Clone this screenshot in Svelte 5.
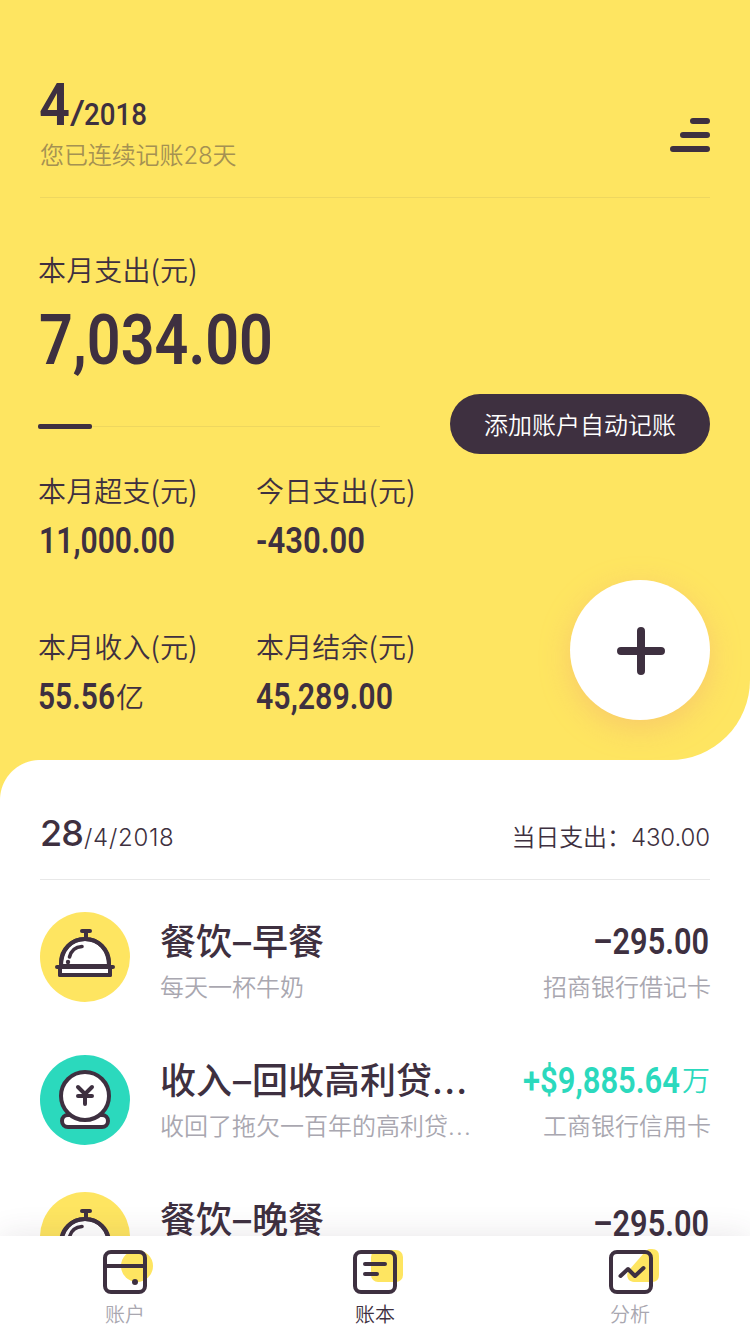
<script>
  const stats = [
    { label: '本月超支(元)', value: '11,000.00', width: 136, x: 1 },
    { label: '今日支出(元)', value: '-430.00', width: 109, x: 0 },
    { label: '本月收入(元)', value: '55.56', width: 77, x: 0, unit: '亿' },
    { label: '本月结余(元)', value: '45,289.00', width: 137, x: 0 }
  ];
  const records = [
    { kind: 'meal', title: ['餐饮', '早餐'], note: '每天一杯牛奶', amount: '–295.00', width: 116, account: '招商银行借记卡', iconTop: 0, amountTop: 0 },
    { kind: 'income', title: ['收入', '回收高利贷'], more: true, note: '收回了拖欠一百年的高利贷', amount: '+$9,885.64', width: 157, unit: '万', account: '工商银行信用卡', iconTop: 4, amountTop: 0 },
    { kind: 'meal', title: ['餐饮', '晚餐'], note: '每天一杯牛奶', amount: '–295.00', width: 116, account: '招商银行借记卡', iconTop: 2, amountTop: 4 }
  ];
</script>

{#snippet figure(text, size, width, x = 0)}
  <svg class="figure" {width} height={size} font-size={size}>
    <text {x} y={size * 0.86} textLength={width} lengthAdjust="spacingAndGlyphs">{text}</text>
  </svg>
{/snippet}

<div class="page">
  <header class="summary">
    <div class="top">
      <div>
        <div class="month">{@render figure('4', 60, 31, -1)}{@render figure('/', 34, 15)}{@render figure('2018', 32, 63)}</div>
        <p class="streak">您已连续记账28天</p>
      </div>
      <svg class="menu" width="40" height="34" viewBox="0 0 40 34">
        <path d="M23 3H37M13 17H37M3 31H37" />
      </svg>
    </div>
    <p class="label">本月支出(元)</p>
    <div class="total">{@render figure('7,034.00', 71, 234, 1)}</div>
    <div class="middle">
      <div class="track"><div class="bar" style:width="54px"></div></div>
      <button class="auto">添加账户自动记账</button>
    </div>
    <div class="bottom">
      <div class="stats">
        {#each stats as s}
          <div>
            <p class="label">{s.label}</p>
            <div class="value">{@render figure(s.value, 36, s.width, s.x)}{#if s.unit}<span class="unit">{s.unit}</span>{/if}</div>
          </div>
        {/each}
      </div>
      <button class="add" aria-label="+">
        <svg width="48" height="48" viewBox="0 0 48 48"><path d="M24 4V44M4 24H44" /></svg>
      </button>
    </div>
  </header>

  <main class="ledger">
    <div class="day">
      <div class="date"><b>28</b><span>/4/2018</span></div>
      <div class="spent">当日支出：<span>430.00</span></div>
    </div>
    {#each records as r}
      <article class="record">
        <div class="badge {r.kind}" style:margin-top="{r.iconTop}px">
          {#if r.kind === 'meal'}
            <svg width="90" height="90" viewBox="0 0 90 90">
              <path class="fill" d="M21 54C21 38 31 27 45 27S69 38 69 54Z" />
              <path class="fill" d="M20 55H70V63H20Z" />
              <path d="M42 19H50M46 19V26M21 54V51C21 37 32 27 45 27S69 37 69 51V54M17 55H73M20 56V63H70V56" />
              <path d="M29.500 45C31 39 35 35 42 34.500" stroke-width="3.600" />
              <circle class="dot" cx="28" cy="50" r="2.200" />
            </svg>
          {:else}
            <svg width="90" height="90" viewBox="0 0 90 90">
              <rect class="fill" x="22" y="60" width="46" height="12" rx="6" />
              <circle class="fill" cx="45" cy="41" r="24" />
              <path d="M38 32L45 39L52 32M38 41H52M45 39V49" />
            </svg>
          {/if}
        </div>
        <div class="what">
          <h3>{r.title[0]}<span class="dash">–</span>{r.title[1]}{#if r.more}<span class="dots">...</span>{/if}</h3>
          <p>{r.note}{#if r.more}<span class="dots">...</span>{/if}</p>
        </div>
        <div class="much" class:plus={r.kind === 'income'} style:margin-top="{r.amountTop}px">
          <div class="amount">{@render figure(r.amount, 36, r.width, r.unit ? -2 : -1)}{#if r.unit}<span class="unit">{r.unit}</span>{/if}</div>
          <p>{r.account}</p>
        </div>
      </article>
    {/each}
  </main>

  <nav>
    <a href="#accounts">
      <svg width="60" height="50" viewBox="0 0 60 50">
        <circle class="tint" cx="42" cy="21" r="16" />
        <rect x="10" y="7" width="40" height="40" rx="6" />
        <path d="M10 21H50" />
        <circle class="dot" cx="40" cy="37" r="3" />
      </svg>
      <span>账户</span>
    </a>
    <a href="#book" class="active">
      <svg width="60" height="50" viewBox="0 0 60 50">
        <rect class="tint" x="26" y="5" width="32" height="32" rx="7" />
        <rect x="10" y="7" width="40" height="40" rx="6" />
        <path d="M20 19H40M20 29H32" />
      </svg>
      <span>账本</span>
    </a>
    <a href="#analysis">
      <svg width="60" height="50" viewBox="0 0 60 50">
        <path class="tint" d="M50 4H52Q59 4 59 11V30Q59 37 52 37H34C27 37 25 29 30 24L44 8Q47 4 50 4Z" />
        <rect x="11" y="7" width="40" height="40" rx="6" />
        <path d="M20.500 31L28 24L35 31L43.500 23" />
      </svg>
      <span>分析</span>
    </a>
  </nav>
</div>

<style>
  :global(body) { margin: 0; }
  * { box-sizing: border-box; }
  p, h3 { margin: 0; }
  button { border: 0; padding: 0; font: inherit; }
  .page {
    width: 750px;
    height: 1334px;
    overflow: hidden;
    display: flex;
    flex-direction: column;
    color: #3e3040;
    background: #fff;
    font-family: Inter, "Noto Sans CJK SC", sans-serif;
    font-weight: 350;
    white-space: nowrap;
  }
  .figure {
    display: block;
    flex: none;
    overflow: visible;
    font-family: Roboto, sans-serif;
    font-weight: 600;
    fill: currentColor;
  }
  .summary {
    height: 760px;
    flex: none;
    padding: 0 40px 0 38px;
    background: #fee561;
    border-bottom-right-radius: 80px;
  }
  .top {
    height: 198px;
    margin-left: 2px;
    border-bottom: 1px solid #eed75f;
    display: flex;
    justify-content: space-between;
  }
  .month { display: flex; align-items: flex-end; padding-top: 73px; }
  .month .figure + .figure { margin-bottom: 4px; margin-left: -1px; font-weight: 500; }
  .streak { margin-top: 5px; font-size: 24px; line-height: 36px; letter-spacing: -0.1px; color: #a59152; }
  .menu { margin-top: 118px; }
  .menu path { stroke: #3e3040; stroke-width: 6; stroke-linecap: round; }
  .label { font-family: "Noto Sans CJK SC", sans-serif; font-size: 28px; line-height: 40px; letter-spacing: 0.15px; }
  .summary > .label { margin-top: 51px; }
  .total { margin-top: 14px; }
  .middle { display: flex; justify-content: space-between; margin-top: 20px; height: 60px; }
  .track { width: 342px; height: 5px; margin-top: 30px; background: linear-gradient(#eed75f, #eed75f) 0 2px / 100% 1px no-repeat; }
  .bar { height: 5px; border-radius: 2px; background: #3e3040; }
  .auto { width: 260px; height: 60px; padding-bottom: 2px; border-radius: 30px; background: #3e3040; color: #fff; font-size: 24px; }
  .bottom { display: flex; justify-content: space-between; }
  .stats { display: grid; grid-template-columns: 218px 218px; grid-auto-rows: 156px; padding-top: 16px; }
  .value { display: flex; align-items: center; height: 36px; margin-top: 12px; }
  .unit { font-size: 28px; line-height: 36px; padding-top: 4px; margin-left: 1px; }
  .amount .unit { padding-top: 1px; margin-left: 0; }
  .add {
    width: 140px;
    height: 140px;
    margin-top: 126px;
    padding: 2px 0 0 2px;
    border-radius: 50%;
    display: grid;
    place-items: center;
    background: #fff;
    box-shadow: 0 8px 30px rgba(240, 160, 120, .4);
  }
  .add path { stroke: #3e3040; stroke-width: 8; stroke-linecap: round; }

  .ledger {
    flex: 1;
    min-height: 0;
    overflow: hidden;
    padding: 0 40px;
    background: radial-gradient(circle at 40px 40px, #fff 39.500px, #fee561 40.500px) 0 0 / 40px 40px no-repeat, #fff;
  }
  .day {
    display: flex;
    justify-content: space-between;
    align-items: baseline;
    height: 120px;
    padding-top: 49px;
    border-bottom: 1px solid #e8e8e8;
    font-size: 24px;
    line-height: 48px;
  }
  .date b { font-size: 36px; font-weight: 500; letter-spacing: -0.9px; margin-right: 1px; }
  .date span { letter-spacing: 0.7px; }
  .spent { letter-spacing: -0.1px; }
  .record { display: flex; height: 139px; }
  .day + .record { margin-top: 32px; }
  .badge { width: 90px; height: 90px; border-radius: 50%; flex: none; }
  .badge.meal { background: #fee561; }
  .badge.income { background: #2bd9bd; }
  .badge svg { display: block; fill: none; stroke: #3e3040; stroke-width: 4; stroke-linecap: round; stroke-linejoin: round; }
  .badge .fill { fill: #fff; }
  svg .dot { fill: #3e3040; stroke: none; }
  .what { flex: 1; margin-left: 30px; }
  h3 { font-size: 36px; line-height: 60px; height: 60px; font-weight: 500; }
  .dash { margin: 0 1px; }
  .dots { letter-spacing: 1.2px; }
  .what p, .much p { margin-top: 1px; font-size: 24px; line-height: 30px; color: #a9a7b0; }
  .much { display: flex; flex-direction: column; align-items: flex-end; }
  .amount { display: flex; align-items: center; height: 60px; margin-top: -1px; }
  .much p { margin-right: -1px; margin-top: 2px; }
  .plus .amount { color: #2bd9bd; }

  nav {
    position: relative;
    height: 98px;
    flex: none;
    display: flex;
    gap: 190px;
    padding: 0 0 0 95px;
    background: #fff;
    box-shadow: 0 0 30px rgba(62, 48, 64, .12);
  }
  nav a {
    width: 60px;
    padding-top: 9px;
    display: flex;
    flex-direction: column;
    align-items: center;
    color: #a9a7b0;
    text-decoration: none;
    font-size: 20px;
    line-height: 40px;
  }
  nav a:last-child { margin-left: 5px; }
  nav .active { color: #3e3040; }
  nav svg { flex: none; fill: none; stroke: #3e3040; stroke-width: 4; stroke-linecap: round; stroke-linejoin: round; }
  nav .tint { fill: #fee561; stroke: none; }
</style>
